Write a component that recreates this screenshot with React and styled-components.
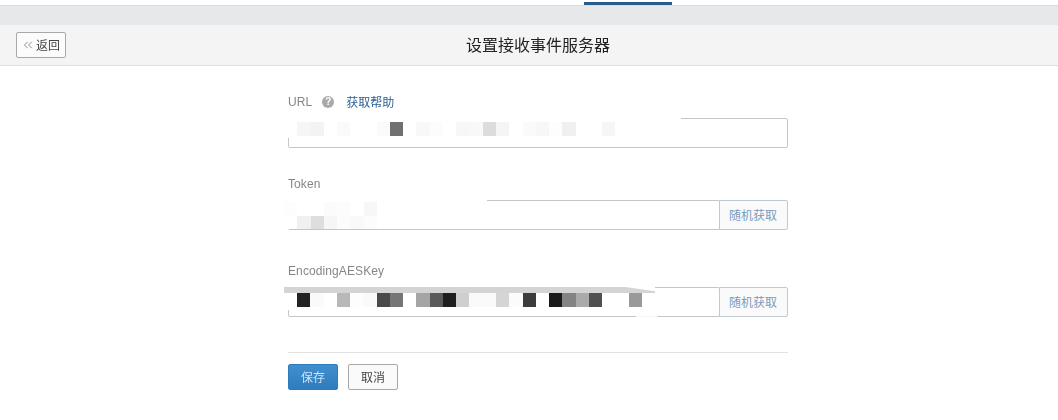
import React from 'react';
import styled, { createGlobalStyle } from 'styled-components';
import { ChevronsLeft } from 'lucide-react';

const FONT = `"Liberation Sans", "Noto Sans CJK SC", sans-serif`;

const urlRows = [[
  '#f6f6f6', '#f3f3f3', '#fff', '#fafafa', '#fff', '#fff', '#fafafa', '#707070', '#fff', '#f8f8f8', '#fcfcfc', '#fff',
  '#f7f7f7', '#f8f8f8', '#dcdcdc', '#f5f5f5', '#fff', '#fafafa', '#f7f7f7', '#fdfdfd', '#f0f0f0', '#fff', '#fff', '#f6f6f6',
]];

const tokenRows = [
  ['#fdfdfd', '#fff', '#fff', '#fbfbfb', '#fcfcfc', '#fff', '#f7f7f7'],
  ['#fff', '#f0f0f0', '#dedede', '#f6f6f6', '#fcfcfc', '#f9f9f9', '#fcfcfc'],
];

const aesRows = [[
  '#222', '#fafafa', '#fff', '#b8b8b8', '#fdfdfd', '#fafafa', '#4a4a4a', '#757575', '#fff', '#a5a5a5', '#5a5a5a', '#1f1f1f', '#cfcfcf',
  '#fafafa', '#fafafa', '#d5d5d5', '#fbfbfb', '#3c3c3c', '#fff', '#1a1a1a', '#838383', '#aaa', '#505050', '#fff', '#fff', '#999',
]];

// Pixelated patch laid over an input
function Mosaic({ rows, ...rest }) {
  return (
    <Cover {...rest}>
      {rows.map((row, i) => (
        <MosaicRow key={i}>
          {row.map((shade, j) => <Cell key={j} style={{ background: shade }} />)}
        </MosaicRow>
      ))}
    </Cover>
  );
}

export default function App() {
  return (
    <Page>
      <GlobalStyle />
      <TabBar><ActiveTab /></TabBar>
      <Band />
      <Header>
        <BackButton><ChevronsLeft size={14} strokeWidth={1} />返回</BackButton>
        <Title>设置接收事件服务器</Title>
      </Header>
      <Form>
        <Field $gap={26}>
          <Label>
            URL
            <HelpIcon>?</HelpIcon>
            <HelpLink>获取帮助</HelpLink>
          </Label>
          <InputGroup>
            <Input readOnly />
            <Mosaic rows={urlRows} $width={397} $height={21} $inset={9} $pad={5} />
          </InputGroup>
        </Field>
        <Field $gap={31}>
          <Label>Token</Label>
          <InputGroup>
            <Input readOnly />
            <AppendButton>随机获取</AppendButton>
            <Mosaic rows={tokenRows} $width={203} $height={26} $inset={-4} $pad={3} />
          </InputGroup>
        </Field>
        <Field $gap={35}>
          <Label>EncodingAESKey</Label>
          <InputGroup>
            <Input readOnly />
            <AppendButton>随机获取</AppendButton>
            <Mosaic rows={aesRows} $width={371} $height={24} $inset={9} $pad={7} />
            <Smear />
            <BottomSmear />
          </InputGroup>
        </Field>
        <Actions>
          <PrimaryButton>保存</PrimaryButton>
          <DefaultButton>取消</DefaultButton>
        </Actions>
      </Form>
    </Page>
  );
}

const GlobalStyle = createGlobalStyle`
  html, body {
    margin: 0;
    height: 420px;
    overflow: hidden;
    background: #fff;
    font-family: ${FONT};
  }
`;

// The reference is a slightly soft, upscaled capture
const Page = styled.div`
  height: 420px;
  filter: blur(0.35px);
`;

const TabBar = styled.div`
  height: 5px;
  padding: 2px 0 0 584px;
  box-sizing: border-box;
  background: #fff;
`;

const ActiveTab = styled.div`
  width: 88px;
  height: 3px;
  background: #2b5a8e;
`;

const Band = styled.div`
  height: 20px;
  box-sizing: border-box;
  background: #e7e8ea;
  border-top: 1px solid #dcdde0;
`;

const Header = styled.header`
  display: flex;
  align-items: center;
  height: 41px;
  box-sizing: border-box;
  padding-left: 16px;
  background: #f4f4f4;
  border-bottom: 1px solid #dedede;
`;

const BackButton = styled.button`
  display: flex;
  align-items: center;
  justify-content: center;
  gap: 1px;
  width: 50px;
  height: 26px;
  padding: 0 1px 1px 0;
  box-sizing: border-box;
  background: #fbfbfb;
  border: 1px solid #a8a8a8;
  border-radius: 2px;
  color: #444;
  font: 12px ${FONT};
`;

const Title = styled.h1`
  margin: 0 0 2px 400px;
  color: #222;
  font: 400 16px ${FONT};
`;

const Form = styled.main`
  width: 500px;
  margin-left: 288px;
  padding-top: 26px;
`;

const Field = styled.div`
  margin-bottom: ${(p) => p.$gap}px;
`;

const Label = styled.div`
  display: flex;
  align-items: center;
  height: 20px;
  margin-bottom: 6px;
  padding-bottom: 1px;
  box-sizing: border-box;
  color: #868686;
  font-size: 12px;
  letter-spacing: 0.1px;
`;

const HelpIcon = styled.span`
  display: flex;
  align-items: center;
  justify-content: center;
  width: 12px;
  height: 12px;
  margin: 0 12px 0 10px;
  border-radius: 50%;
  background: #a9a9a9;
  color: #fff;
  font-size: 10px;
  font-weight: 700;
`;

const HelpLink = styled.a`
  color: #2b5f93;
  font-size: 12px;
  letter-spacing: 0;
`;

const InputGroup = styled.div`
  position: relative;
  display: flex;
  height: 30px;
`;

const Input = styled.input`
  flex: 1;
  min-width: 0;
  padding: 0;
  box-sizing: border-box;
  background: #fff;
  border: 1px solid #c6c6c6;
  border-radius: 2px;
  outline: none;
`;

const AppendButton = styled.button`
  width: 69px;
  margin-left: -1px;
  padding: 0 1px 1px 0;
  box-sizing: border-box;
  background: #fafafa;
  border: 1px solid #bfc9d4;
  border-radius: 0 2px 2px 0;
  color: #7c9bbb;
  font: 12px ${FONT};
`;

const Cover = styled.div`
  position: absolute;
  top: -1px;
  left: -4px;
  width: ${(p) => p.$width}px;
  height: ${(p) => p.$height}px;
  padding: ${(p) => p.$pad}px 0 0 ${(p) => p.$inset + 4}px;
  box-sizing: border-box;
  background: #fff;
`;

const MosaicRow = styled.div`
  display: flex;
`;

const Cell = styled.span`
  flex: none;
  width: 13.27px;
  height: 13.6px;
`;

const Smear = styled.div`
  position: absolute;
  top: 0;
  left: -4px;
  width: 371px;
  height: 6px;
  background: #d4d4d4;
  clip-path: polygon(0 0, 92% 0, 100% 70%, 100% 100%, 0 100%);
`;

const BottomSmear = styled.div`
  position: absolute;
  top: 24px;
  left: 344px;
  width: 28px;
  height: 8px;
  background: #fff;
  opacity: 0.85;
  clip-path: polygon(0 0, 100% 0, 88% 100%, 20% 100%);
`;

const Actions = styled.div`
  display: flex;
  gap: 10px;
  padding-top: 11px;
  border-top: 1px solid #e2e2e2;
`;

const PrimaryButton = styled.button`
  width: 50px;
  height: 26px;
  padding: 0 0 1px;
  background: linear-gradient(#428fd0, #2f7cbd);
  border: 1px solid #2f7cbd;
  border-radius: 2px;
  color: #cfe3f5;
  font: 12px ${FONT};
`;

const DefaultButton = styled.button`
  width: 50px;
  height: 26px;
  padding: 0 0 1px;
  background: #fafafa;
  border: 1px solid #a8a8a8;
  border-radius: 2px;
  color: #444;
  font: 12px ${FONT};
`;
